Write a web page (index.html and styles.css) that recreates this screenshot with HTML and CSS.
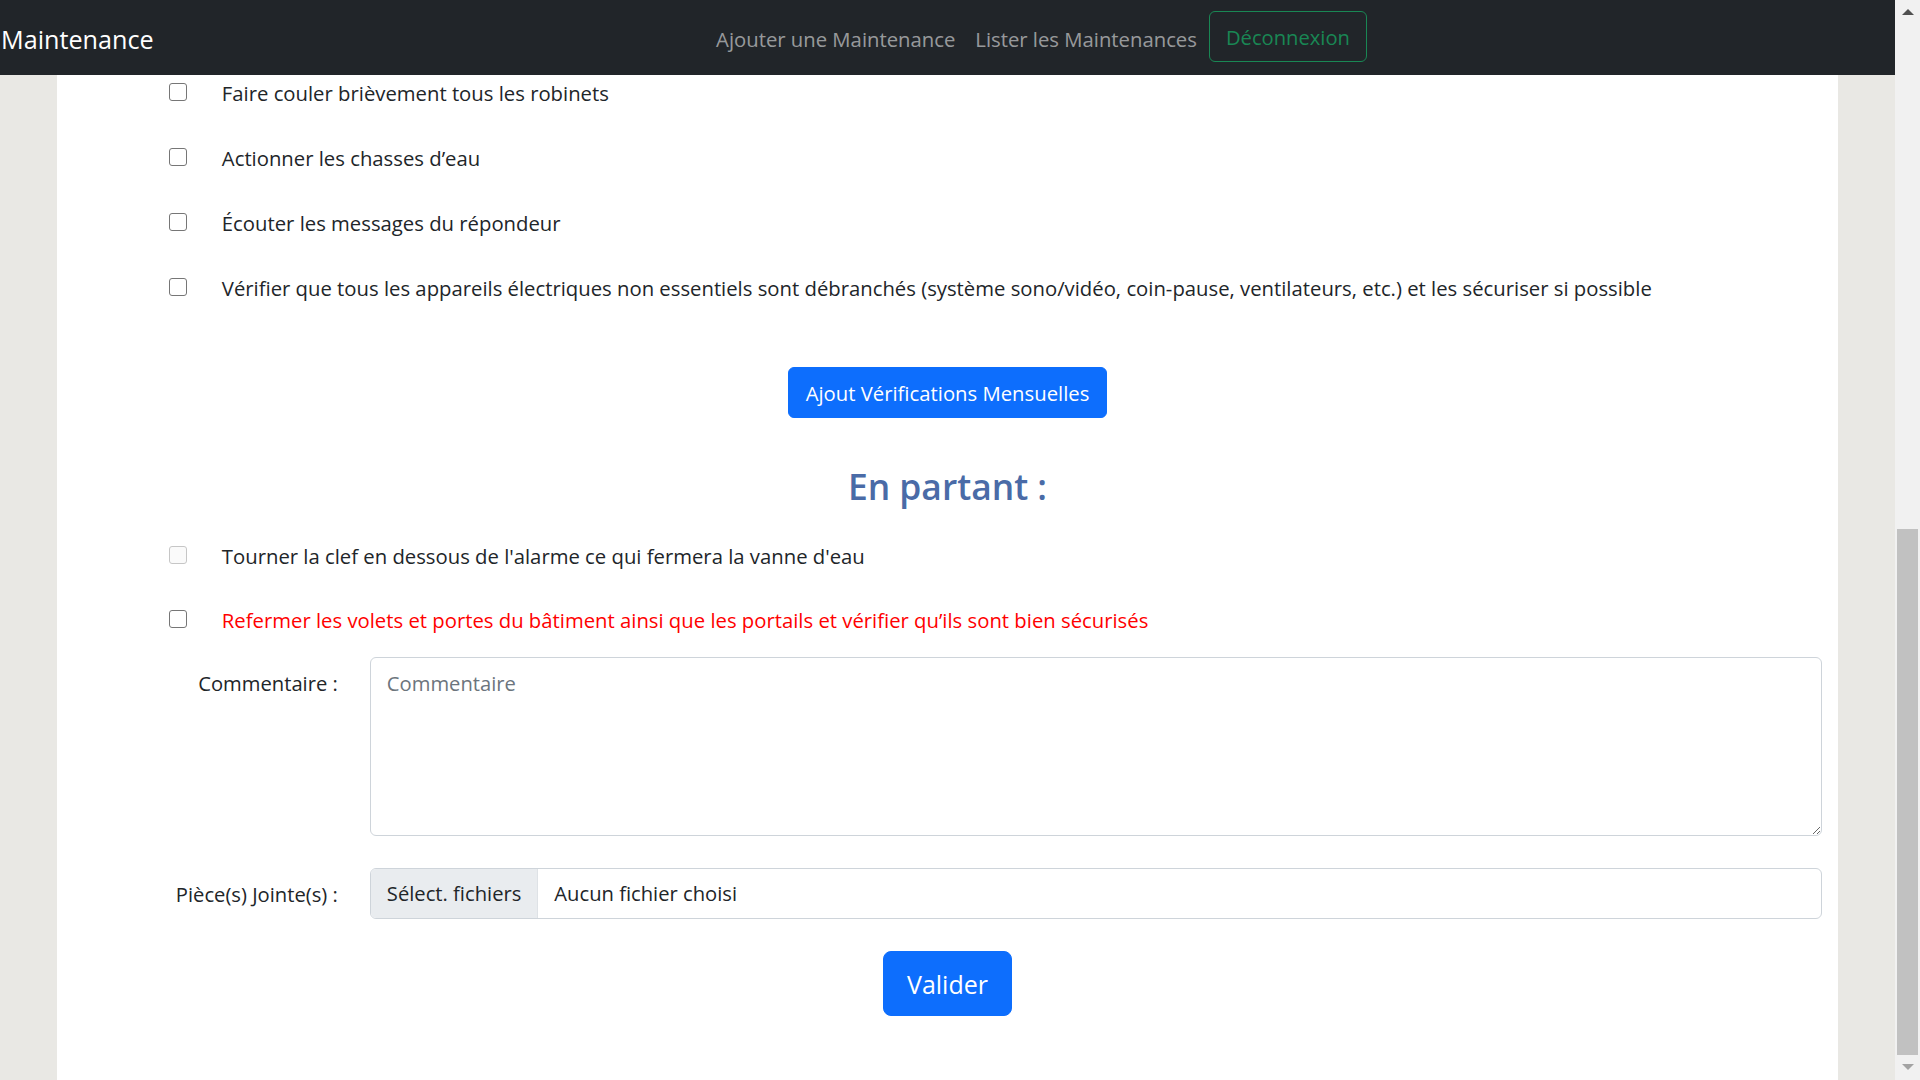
FILE: index.html
```html
<!DOCTYPE html>
<html lang="fr">
<head>
<meta charset="utf-8">
<title>Maintenance</title>
<link rel="stylesheet" href="styles.css">
</head>
<body>
<div class="window">
  <div class="page">
    <nav class="navbar">
      <a class="brand" href="#">Maintenance</a>
      <ul class="nav">
        <li><a class="nav-link" href="#">Ajouter une Maintenance</a></li>
        <li><a class="nav-link" href="#">Lister les Maintenances</a></li>
        <li><button class="btn-outline" type="button">Déconnexion</button></li>
      </ul>
    </nav>
    <main class="container">
      <ul class="checklist">
        <li class="check-row"><input type="checkbox" class="check"><span>Faire couler brièvement tous les robinets</span></li>
        <li class="check-row"><input type="checkbox" class="check"><span>Actionner les chasses d’eau</span></li>
        <li class="check-row"><input type="checkbox" class="check"><span>Écouter les messages du répondeur</span></li>
        <li class="check-row"><input type="checkbox" class="check"><span>Vérifier que tous les appareils électriques non essentiels sont débranchés (système sono/vidéo, coin-pause, ventilateurs, etc.) et les sécuriser si possible</span></li>
      </ul>
      <div class="center first-btn">
        <button class="btn-primary" type="button">Ajout Vérifications Mensuelles</button>
      </div>
      <h2 class="section-title">En partant :</h2>
      <ul class="checklist second">
        <li class="check-row"><input type="checkbox" class="check" disabled><span>Tourner la clef en dessous de l'alarme ce qui fermera la vanne d'eau</span></li>
        <li class="check-row warn"><input type="checkbox" class="check"><span>Refermer les volets et portes du bâtiment ainsi que les portails et vérifier qu’ils sont bien sécurisés</span></li>
      </ul>
      <div class="form-row top">
        <label class="form-label">Commentaire :</label>
        <textarea class="textarea" placeholder="Commentaire"></textarea>
      </div>
      <div class="form-row mid">
        <label class="form-label">Pièce(s) Jointe(s) :</label>
        <div class="file-input">
          <span class="file-btn">Sélect. fichiers</span>
          <span class="file-name">Aucun fichier choisi</span>
        </div>
      </div>
      <div class="center submit">
        <button class="btn-primary btn-lg" type="submit">Valider</button>
      </div>
    </main>
  </div>
  <div class="scrollbar">
    <div class="arrow-up"></div>
    <div class="track"><div class="thumb"></div></div>
    <div class="arrow-down"></div>
  </div>
</div>
</body>
</html>
```

FILE: styles.css
```css
* { box-sizing: border-box; }
html, body { margin: 0; padding: 0; height: 100%; overflow: hidden; }
body {
  font-family: "Open Sans", "Noto Sans", sans-serif;
  font-size: 20.2px;
  color: #212529;
  background: #e9e8e4;
}
.window { display: flex; height: 1080px; }
.page { flex: 1; display: flex; flex-direction: column; min-width: 0; }

.navbar {
  height: 75px;
  background: #212529;
  display: flex;
  align-items: flex-start;
  flex-shrink: 0;
}
.brand {
  color: #fff;
  text-decoration: none;
  font-size: 25.2px;
  line-height: 36px;
  padding-top: 21px;
  padding-left: 1px;
}
.nav {
  list-style: none;
  margin: 0 528px 0 auto;
  padding: 11px 0 0;
  display: flex;
  align-items: flex-start;
}
.nav-link {
  display: block;
  color: rgba(255,255,255,.55);
  text-decoration: none;
  padding: 12px 10px 0;
  line-height: 32px;
  font-size: 20.3px;
}
.btn-outline {
  margin-left: 2px;
  height: 51px;
  padding: 0 16px;
  border: 1px solid #198754;
  border-radius: 6px;
  background: transparent;
  color: #198754;
  font-family: inherit;
  font-size: 20.2px;
}

.container {
  width: 94%;
  margin: 0 auto;
  background: #fff;
  flex: 1;
  padding: 2px 0 0 0;
}
.checklist {
  list-style: none;
  margin: 0;
  padding: 0 0 0 112px;
  display: flex;
  flex-direction: column;
  gap: 33px;
}
.checklist.second { margin-top: 30px; gap: 32px; }
.check-row {
  display: flex;
  align-items: flex-start;
  line-height: 32px;
  font-size: 20.3px;
}
.check-row.warn { color: #ff0000; }
.check {
  appearance: none;
  -webkit-appearance: none;
  width: 18px;
  height: 18px;
  margin: 6px 35px 0 0;
  border: 1px solid #767676;
  border-radius: 3px;
  background: #fff;
  flex-shrink: 0;
}
.check:disabled { border-color: #c6c6c6; background: #fafafa; }

.center { display: flex; justify-content: center; }
.first-btn { margin-top: 63px; }
.btn-primary {
  height: 51px;
  padding: 0 17px;
  background: #0d6efd;
  border: 1px solid #0d6efd;
  border-radius: 6px;
  color: #fff;
  font-family: inherit;
  font-size: 20.3px;
}
.btn-lg {
  height: 65px;
  padding: 0 23px;
  font-size: 25px;
  border-radius: 8px;
}
.section-title {
  margin: 44px 0 0;
  text-align: center;
  font-size: 35.4px;
  line-height: 48px;
  font-weight: 600;
  color: #4a6ba7;
}

.form-row {
  display: flex;
  gap: 32px;
  padding-right: 16px;
}
.form-row.top { margin-top: 21px; align-items: flex-start; }
.form-row.mid { margin-top: 32px; align-items: center; }
.form-label {
  width: 281px;
  flex-shrink: 0;
  text-align: right;
  line-height: 32px;
}
.form-row.top .form-label { padding-top: 10px; }
.textarea {
  flex: 1;
  height: 179px;
  border: 1px solid #ced4da;
  border-radius: 6px;
  padding: 9px 16px;
  font-family: inherit;
  font-size: 20.2px;
  line-height: 32px;
  color: #212529;
  resize: vertical;
}
.textarea::placeholder { color: #6c757d; }
.file-input {
  flex: 1;
  height: 51px;
  border: 1px solid #ced4da;
  border-radius: 6px;
  display: flex;
  align-items: stretch;
  overflow: hidden;
  line-height: 49px;
}
.file-btn {
  background: #e9ecef;
  border-right: 1px solid #dee2e6;
  padding: 0 16px;
}
.file-name { padding: 0 16px; }
.submit { margin-top: 32px; }

.scrollbar {
  width: 25px;
  flex-shrink: 0;
  background: #f1f1f1;
  display: flex;
  flex-direction: column;
  align-items: center;
}
.arrow-up {
  margin-top: 9px;
  width: 0; height: 0;
  border-left: 6px solid transparent;
  border-right: 6px solid transparent;
  border-bottom: 6px solid #505050;
}
.track { flex: 1; width: 100%; padding: 514px 2px 0; display: flex; flex-direction: column; }
.thumb { width: 21px; height: 526px; background: #c1c1c1; margin: 0 auto; }
.arrow-down {
  margin: 7px 0 10px;
  width: 0; height: 0;
  border-left: 6px solid transparent;
  border-right: 6px solid transparent;
  border-top: 6px solid #a3a3a3;
}
```
